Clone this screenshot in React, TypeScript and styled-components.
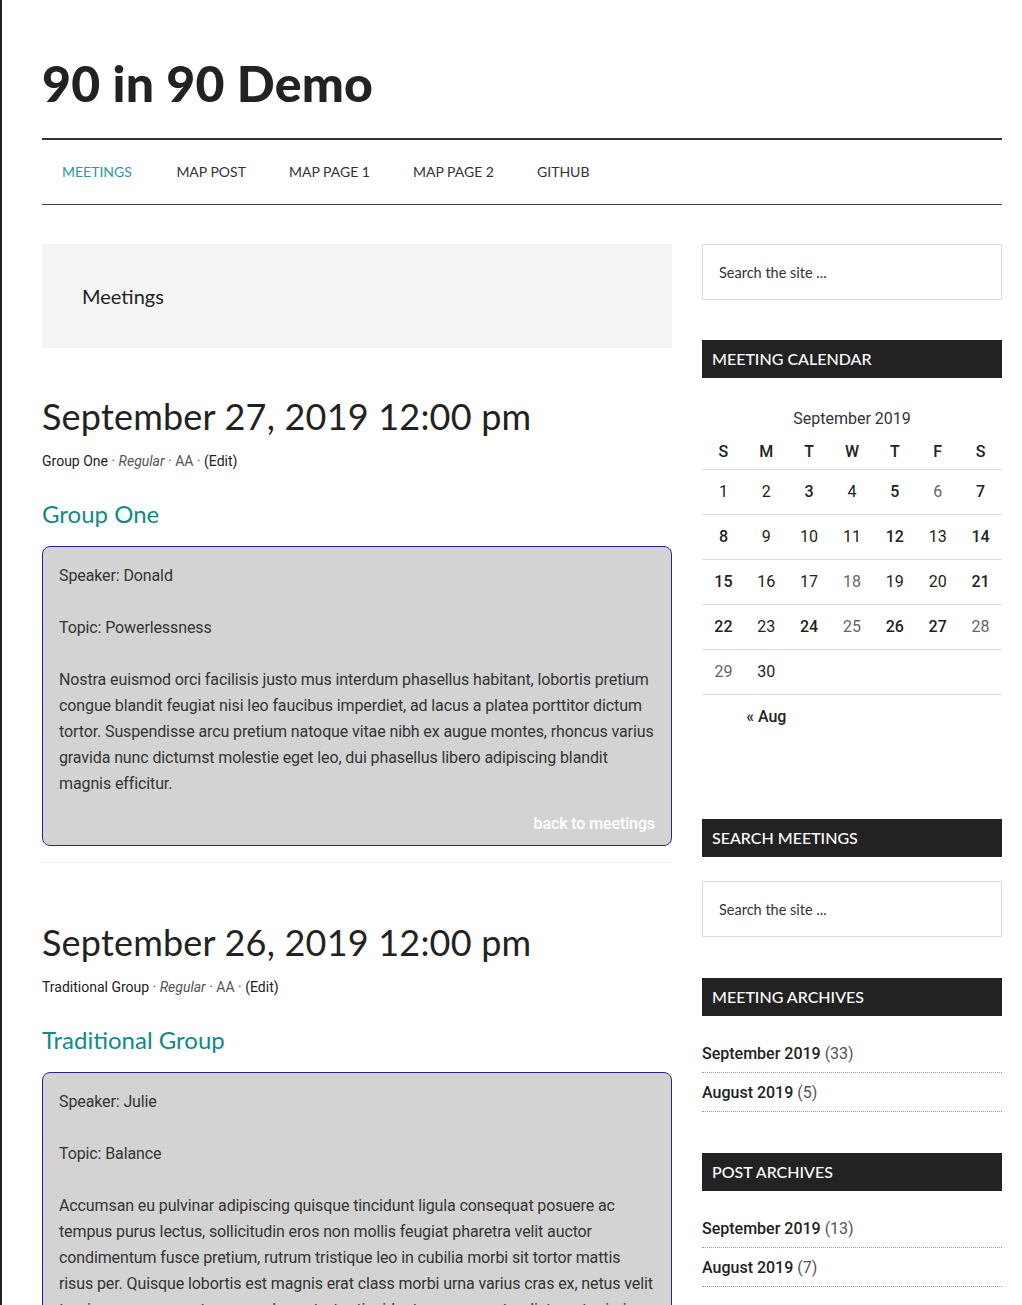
import React from "react";
import styled, { createGlobalStyle } from "styled-components";

const GlobalStyle = createGlobalStyle`
  html, body { margin: 0; padding: 0; background: #fff; }
  body {
    border-left: 2px solid #222;
    font-family: Roboto, "Liberation Sans", sans-serif;
    color: #333;
    min-height: 1305px;
    box-sizing: border-box;
  }
  * { box-sizing: border-box; }
`;

const HEAD = `Lato, "Open Sans", "Liberation Sans", sans-serif`;

const Site = styled.div`
  width: 960px;
  margin-left: 40px;
`;

const Header = styled.header`
  padding: 59px 0 31px;
`;

const SiteTitle = styled.h1`
  margin: 0;
  font-family: ${HEAD};
  font-weight: 900;
  font-size: 50px;
  line-height: 48px;
  color: #222;
  letter-spacing: 0.2px;
`;

const Nav = styled.nav`
  display: flex;
  border-top: 2px solid #333;
  border-bottom: 1px solid #444;
`;

const NavItem = styled.a<{ $active?: boolean }>`
  display: block;
  padding: 24px 21.5px;
  font-family: ${HEAD};
  font-size: 14px;
  line-height: 16px;
  text-transform: uppercase;
  color: ${(p) => (p.$active ? "#2a9a9a" : "#333")};
  text-decoration: none;
  &:first-child { padding-left: 20px; padding-right: 23px; }
`;

const Main = styled.div`
  display: grid;
  grid-template-columns: 630px 300px;
  column-gap: 30px;
  margin-top: 39px;
`;

const Content = styled.main``;

const ArchiveHeader = styled.div`
  background: #f5f5f5;
  padding: 40px;
  margin-bottom: 47px;
`;

const ArchiveTitle = styled.h1`
  margin: 0;
  font-family: ${HEAD};
  font-weight: 400;
  font-size: 20px;
  line-height: 24px;
  color: #222;
`;

const Entry = styled.article`
  border-bottom: 1px solid #eee;
  padding-bottom: 16px;
  margin-bottom: 58px;
`;

const EntryTitle = styled.h2`
  margin: 0 0 13px;
  font-family: ${HEAD};
  font-weight: 400;
  font-size: 36px;
  line-height: 43px;
  color: #222;
  letter-spacing: 0.2px;
`;

const Meta = styled.p`
  margin: 0 0 28px;
  font-size: 14px;
  line-height: 20px;
  color: #222;
`;

const MetaSoft = styled.span<{ $italic?: boolean }>`
  color: #555;
  font-style: ${(p) => (p.$italic ? "italic" : "normal")};
`;

const GroupTitle = styled.h3`
  margin: 0 0 17px;
  font-family: ${HEAD};
  font-weight: 400;
  font-size: 24px;
  line-height: 30px;
  color: #0f8a8a;
`;

const Card = styled.div`
  background: #d3d3d3;
  border: 1px solid #2424a0;
  border-radius: 8px;
  padding: 16px 16px 8px;
  font-size: 16px;
  line-height: 26px;
  letter-spacing: -0.11px;
  color: #333;
`;

const CardPara = styled.p`
  margin: 0 0 26px;
  &:last-of-type { margin-bottom: 0; }
`;

const BackLink = styled.a`
  display: block;
  margin-top: 14px;
  text-align: right;
  color: #fff;
  font-weight: 500;
  text-decoration: none;
`;

const Sidebar = styled.aside``;

const Widget = styled.section<{ $gap?: number }>`
  margin-bottom: ${(p) => p.$gap ?? 40}px;
`;

const WidgetTitle = styled.h4`
  margin: 0 0 24px;
  background: #222;
  color: #fff;
  font-family: ${HEAD};
  font-weight: 500;
  font-size: 16px;
  line-height: 20px;
  padding: 9px 10px;
  text-transform: uppercase;
`;

const SearchInput = styled.input`
  display: block;
  width: 100%;
  height: 56px;
  border: 1px solid #ddd;
  padding: 0 16px;
  font-family: ${HEAD};
  font-size: 14.5px;
  color: #333;
  background: #fff;
  outline: none;
  &::placeholder { color: #333; opacity: 1; }
`;

const CalTable = styled.table`
  width: 100%;
  border-collapse: collapse;
  table-layout: fixed;
  font-size: 16px;
`;

const Caption = styled.caption`
  font-size: 16px;
  line-height: 30px;
  padding-top: 2px;
  color: #333;
  text-align: center;
`;

const HeadCell = styled.th`
  height: 35px;
  font-weight: 500;
  color: #222;
  text-align: center;
  border-bottom: 1px solid #ddd;
  padding: 0;
`;

const DayCell = styled.td<{ $tone: "bold" | "normal" | "light" }>`
  height: 45px;
  text-align: center;
  border-bottom: 1px solid #ddd;
  padding: 0;
  font-weight: ${(p) => (p.$tone === "bold" ? 500 : 400)};
  color: ${(p) => (p.$tone === "light" ? "#666" : "#222")};
`;

const PrevCell = styled.td`
  height: 45px;
  text-align: center;
  padding: 0;
  color: #222;
  font-weight: 500;
`;

const ArchiveList = styled.ul`
  list-style: none;
  margin: 0;
  padding: 2px 0 0;
`;

const ArchiveItem = styled.li`
  font-size: 16px;
  line-height: 24px;
  padding: 0 0 6px;
  border-bottom: 1px dotted #999;
  & + & { padding-top: 8px; }
`;

const ArchiveLink = styled.a`
  color: #222;
  font-weight: 500;
  text-decoration: none;
`;

const Count = styled.span`
  color: #555;
`;

type Tone = "bold" | "normal" | "light";
const bold = [3, 5, 7, 8, 12, 14, 15, 21, 22, 24, 26, 27];
const light = [6, 18, 25, 28, 29];
const toneOf = (d: number): Tone =>
  bold.includes(d) ? "bold" : light.includes(d) ? "light" : "normal";

const weeks: (number | null)[][] = [
  [1, 2, 3, 4, 5, 6, 7],
  [8, 9, 10, 11, 12, 13, 14],
  [15, 16, 17, 18, 19, 20, 21],
  [22, 23, 24, 25, 26, 27, 28],
  [29, 30, null, null, null, null, null],
];

const meetings = [
  {
    date: "September 27, 2019 12:00 pm",
    group: "Group One",
    speaker: "Speaker: Donald",
    topic: "Topic: Powerlessness",
    body:
      "Nostra euismod orci facilisis justo mus interdum phasellus habitant, lobortis pretium congue blandit feugiat nisi leo faucibus imperdiet, ad lacus a platea porttitor dictum tortor. Suspendisse arcu pretium natoque vitae nibh ex augue montes, rhoncus varius gravida nunc dictumst molestie eget leo, dui phasellus libero adipiscing blandit magnis efficitur.",
  },
  {
    date: "September 26, 2019 12:00 pm",
    group: "Traditional Group",
    speaker: "Speaker: Julie",
    topic: "Topic: Balance",
    body:
      "Accumsan eu pulvinar adipiscing quisque tincidunt ligula consequat posuere ac tempus purus lectus, sollicitudin eros non mollis feugiat pharetra velit auctor condimentum fusce pretium, rutrum tristique leo in cubilia morbi sit tortor mattis risus per. Quisque lobortis est magnis erat class morbi urna varius cras ex, netus velit turpis aenean nascetur ornare lacus tortor tincidunt aenean nostra dictumst primis purus lorem.",
  },
];

export default function App() {
  return (
    <>
      <GlobalStyle />
      <Site>
        <Header>
          <SiteTitle>90 in 90 Demo</SiteTitle>
        </Header>
        <Nav>
          <NavItem href="#" $active>Meetings</NavItem>
          <NavItem href="#">Map Post</NavItem>
          <NavItem href="#">Map Page 1</NavItem>
          <NavItem href="#">Map Page 2</NavItem>
          <NavItem href="#">Github</NavItem>
        </Nav>
        <Main>
          <Content>
            <ArchiveHeader>
              <ArchiveTitle>Meetings</ArchiveTitle>
            </ArchiveHeader>
            {meetings.map((m) => (
              <Entry key={m.date}>
                <EntryTitle>{m.date}</EntryTitle>
                <Meta>
                  {m.group}
                  <MetaSoft> · </MetaSoft>
                  <MetaSoft $italic>Regular</MetaSoft>
                  <MetaSoft> · AA · </MetaSoft>
                  (Edit)
                </Meta>
                <GroupTitle>{m.group}</GroupTitle>
                <Card>
                  <CardPara>{m.speaker}</CardPara>
                  <CardPara>{m.topic}</CardPara>
                  <CardPara>{m.body}</CardPara>
                  <BackLink href="#">back to meetings</BackLink>
                </Card>
              </Entry>
            ))}
          </Content>
          <Sidebar>
            <Widget>
              <SearchInput placeholder="Search the site ..." />
            </Widget>
            <Widget $gap={80}>
              <WidgetTitle>Meeting Calendar</WidgetTitle>
              <CalTable>
                <Caption>September 2019</Caption>
                <thead>
                  <tr>
                    {["S", "M", "T", "W", "T", "F", "S"].map((d, i) => (
                      <HeadCell key={i}>{d}</HeadCell>
                    ))}
                  </tr>
                </thead>
                <tbody>
                  {weeks.map((w, i) => (
                    <tr key={i}>
                      {w.map((d, j) => (
                        <DayCell key={j} $tone={d ? toneOf(d) : "normal"}>
                          {d ?? ""}
                        </DayCell>
                      ))}
                    </tr>
                  ))}
                </tbody>
                <tfoot>
                  <tr>
                    <PrevCell colSpan={3}>« Aug</PrevCell>
                    <PrevCell colSpan={4} />
                  </tr>
                </tfoot>
              </CalTable>
            </Widget>
            <Widget $gap={41}>
              <WidgetTitle>Search Meetings</WidgetTitle>
              <SearchInput placeholder="Search the site ..." />
            </Widget>
            <Widget $gap={41}>
              <WidgetTitle>Meeting Archives</WidgetTitle>
              <ArchiveList>
                <ArchiveItem>
                  <ArchiveLink href="#">September 2019</ArchiveLink> <Count>(33)</Count>
                </ArchiveItem>
                <ArchiveItem>
                  <ArchiveLink href="#">August 2019</ArchiveLink> <Count>(5)</Count>
                </ArchiveItem>
              </ArchiveList>
            </Widget>
            <Widget>
              <WidgetTitle>Post Archives</WidgetTitle>
              <ArchiveList>
                <ArchiveItem>
                  <ArchiveLink href="#">September 2019</ArchiveLink> <Count>(13)</Count>
                </ArchiveItem>
                <ArchiveItem>
                  <ArchiveLink href="#">August 2019</ArchiveLink> <Count>(7)</Count>
                </ArchiveItem>
              </ArchiveList>
            </Widget>
          </Sidebar>
        </Main>
      </Site>
    </>
  );
}
